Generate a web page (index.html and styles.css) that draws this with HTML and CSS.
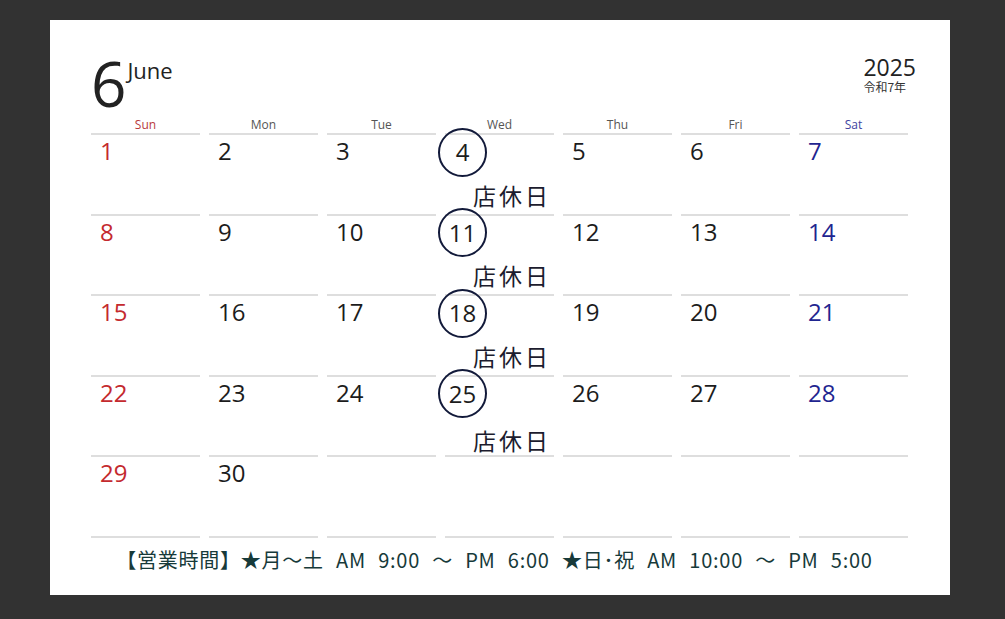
FILE: index.html
```html
<!DOCTYPE html>
<html lang="ja">
<head>
  <meta charset="UTF-8" />
  <title>June 2025</title>
  <link rel="stylesheet" href="styles.css">
</head>
<body>

<div class="card">
  <div class="top">
    <div class="month">
      <span class="month-num">6</span>
      <span class="month-name">June</span>
    </div>
    <div class="year">
      <div class="year-num">2025</div>
      <div class="year-jp">令和7年</div>
    </div>
  </div>

  <div class="grid">
    <div class="wd sun">Sun</div>
    <div class="wd">Mon</div>
    <div class="wd">Tue</div>
    <div class="wd">Wed</div>
    <div class="wd">Thu</div>
    <div class="wd">Fri</div>
    <div class="wd sat">Sat</div>

    <div class="day sun"><span class="num">1</span></div>
    <div class="day"><span class="num">2</span></div>
    <div class="day"><span class="num">3</span></div>
    <div class="day"><span class="num circle">4</span><span class="closed">店休日</span></div>
    <div class="day"><span class="num">5</span></div>
    <div class="day"><span class="num">6</span></div>
    <div class="day sat"><span class="num">7</span></div>

    <div class="day sun"><span class="num">8</span></div>
    <div class="day"><span class="num">9</span></div>
    <div class="day"><span class="num">10</span></div>
    <div class="day"><span class="num circle">11</span><span class="closed">店休日</span></div>
    <div class="day"><span class="num">12</span></div>
    <div class="day"><span class="num">13</span></div>
    <div class="day sat"><span class="num">14</span></div>

    <div class="day sun"><span class="num">15</span></div>
    <div class="day"><span class="num">16</span></div>
    <div class="day"><span class="num">17</span></div>
    <div class="day"><span class="num circle">18</span><span class="closed">店休日</span></div>
    <div class="day"><span class="num">19</span></div>
    <div class="day"><span class="num">20</span></div>
    <div class="day sat"><span class="num">21</span></div>

    <div class="day sun"><span class="num">22</span></div>
    <div class="day"><span class="num">23</span></div>
    <div class="day"><span class="num">24</span></div>
    <div class="day"><span class="num circle">25</span><span class="closed last">店休日</span></div>
    <div class="day"><span class="num">26</span></div>
    <div class="day"><span class="num">27</span></div>
    <div class="day sat"><span class="num">28</span></div>

    <div class="day sun"><span class="num">29</span></div>
    <div class="day"><span class="num">30</span></div>
    <div class="day"></div>
    <div class="day"></div>
    <div class="day"></div>
    <div class="day"></div>
    <div class="day"></div>
  </div>

  <p class="hours">【営業時間】★月～土 AM 9:00 ～ PM 6:00 ★日･祝 AM 10:00 ～ PM 5:00</p>
</div>

</body>
</html>
```

FILE: styles.css
```css
html, body {
  margin: 0;
  height: 100%;
}
body {
  background: #323232;
  font-family: "Open Sans", "Noto Sans CJK JP", sans-serif;
  color: #1c1c1c;
  padding: 20px 0 0 50px;
  box-sizing: border-box;
  overflow: hidden;
}
.card {
  background: #fff;
  width: 900px;
  height: 575px;
  box-sizing: border-box;
  padding: 32px 42px 0 41px;
}
.top {
  display: flex;
  justify-content: space-between;
  height: 65px;
}
.month {
  display: flex;
  align-items: flex-start;
}
.month-num {
  font-size: 62px;
  line-height: 62px;
  color: #222;
}
.month-name {
  font-size: 22px;
  line-height: 22px;
  margin-top: 7px;
  margin-left: 1px;
  color: #222;
}
.year {
  margin-right: -8px;
  margin-top: 3px;
}
.year-num {
  font-size: 23px;
  line-height: 24px;
  color: #222;
}
.year-jp {
  font-family: "Noto Sans CJK JP", sans-serif;
  font-size: 12px;
  line-height: 13px;
  margin-top: 1px;
  color: #333;
}
.grid {
  display: grid;
  grid-template-columns: repeat(7, 1fr);
  column-gap: 9px;
}
.wd {
  height: 16px;
  border-bottom: 2px solid #dedede;
  text-align: center;
  font-size: 12px;
  line-height: 15px;
  color: #555;
}
.wd.sun {
  color: #b8383c;
}
.wd.sat {
  color: #3f43a0;
}
.day {
  height: 80.6px;
  box-sizing: border-box;
  border-bottom: 2px solid #dedede;
  display: flex;
  flex-direction: column;
  align-items: flex-start;
}
.num {
  font-size: 24px;
  line-height: 30px;
  padding: 1px 0 0 9px;
  color: #1c1c1c;
}
.day.sun .num {
  color: #c42a2e;
}
.day.sat .num {
  color: #1f2590;
}
.num.circle {
  width: 49px;
  height: 49px;
  box-sizing: border-box;
  border: 2.5px solid #121a3a;
  border-radius: 50%;
  padding: 0;
  margin: -7.5px 0 0 -7px;
  display: flex;
  align-items: center;
  justify-content: center;
}
.closed {
  align-self: flex-end;
  margin-top: auto;
  margin-bottom: 7px;
  margin-right: 3px;
  font-family: "Noto Sans CJK JP", sans-serif;
  font-size: 23px;
  line-height: 23px;
  letter-spacing: 3px;
  color: #1c1c2e;
}
.closed.last {
  margin-bottom: 3px;
}
.hours {
  margin: 0;
  padding: 10px 10px 0 0;
  text-align: center;
  font-family: "Noto Sans CJK JP", sans-serif;
  font-size: 20px;
  line-height: 24px;
  word-spacing: 7px;
  letter-spacing: 0.75px;
  color: #173a3a;
}
```
